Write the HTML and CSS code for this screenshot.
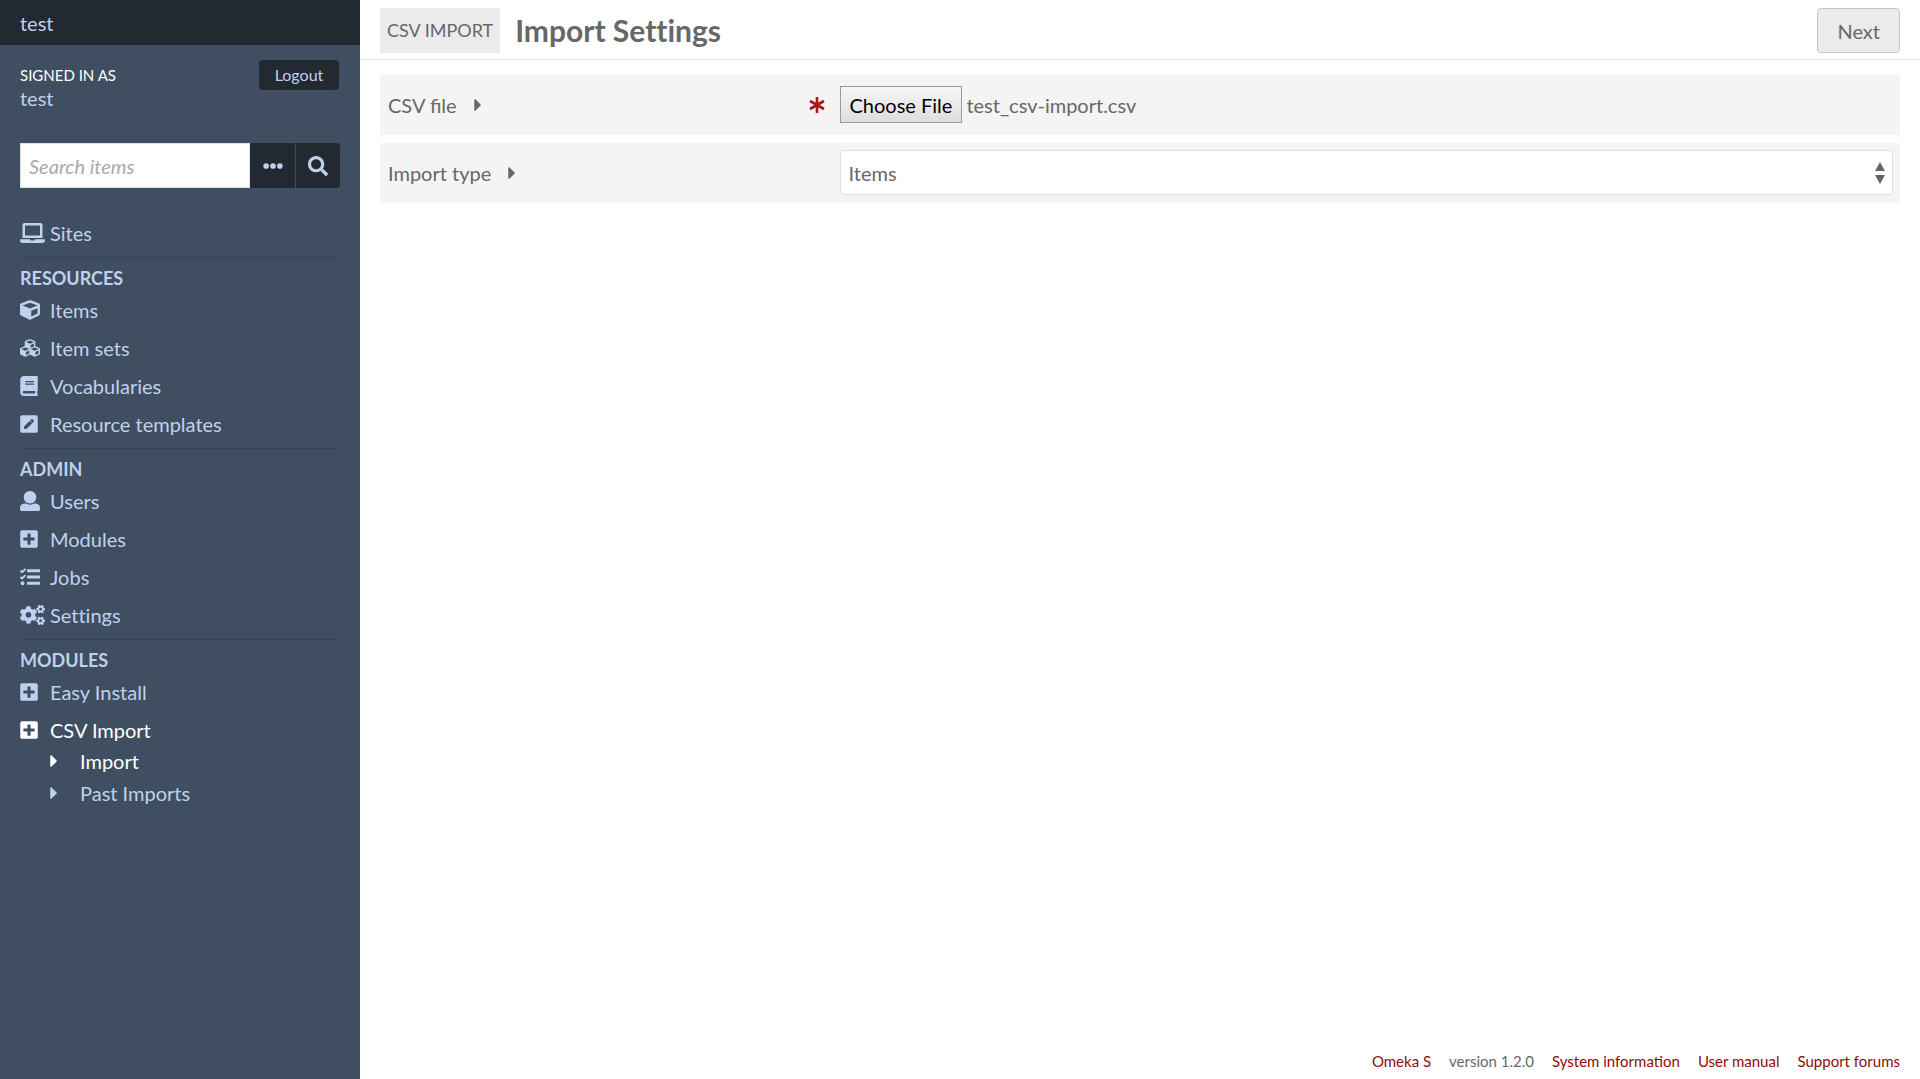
FILE: index.html
```html
<!DOCTYPE html>
<html lang="en">
<head>
<meta charset="utf-8">
<title>Import Settings</title>
<link rel="stylesheet" href="styles.css">
</head>
<body>
<svg class="sprite" aria-hidden="true">
  <symbol id="i-laptop" viewBox="0 0 640 512"><path d="M624 416H381.54c-.74 19.81-14.71 32-32.74 32H288c-18.69 0-33.02-17.47-32.77-32H16c-8.8 0-16 7.2-16 16v16c0 35.2 28.8 64 64 64h512c35.2 0 64-28.8 64-64v-16c0-8.8-7.2-16-16-16zM576 48c0-26.4-21.6-48-48-48H112C85.6 0 64 21.6 64 48v336h512V48zm-64 272H128V64h384v256z"/></symbol>
  <symbol id="i-cube" viewBox="0 0 512 512"><path d="M239.1 6.3l-208 78c-18.7 7-31.1 25-31.1 45v225.1c0 18.2 10.3 34.8 26.5 42.9l208 104c13.5 6.8 29.4 6.8 42.9 0l208-104c16.3-8.1 26.5-24.8 26.5-42.9V129.3c0-20-12.4-37.9-31.1-44.9l-208-78C262 2.2 250 2.2 239.1 6.3zM256 68.4l192 72v1.1l-192 78-192-78v-1.1l192-72zm32 356V275.5l160-65v133.9l-160 80z"/></symbol>
  <symbol id="i-cubes" viewBox="0 0 512 512"><path d="M488.6 250.2L392 214V105.5c0-15-9.3-28.4-23.4-33.7l-100-37.5c-8.1-3.1-17.1-3.1-25.3 0l-100 37.5c-14.1 5.3-23.4 18.7-23.4 33.7V214l-96.6 36.2C9.3 255.5 0 268.9 0 283.9V394c0 13.6 7.7 26.1 19.9 32.2l100 50c10.1 5.1 22.1 5.1 32.2 0l103.9-52 103.9 52c10.1 5.1 22.1 5.1 32.2 0l100-50c12.2-6.1 19.9-18.6 19.9-32.2V283.9c0-15-9.3-28.4-23.4-33.7zM358 214.8l-85 31.9v-68.2l85-37v73.3zM154 104.1l102-38.2 102 38.2v.6l-102 41.4-102-41.4v-.6zm84 291.1l-85 42.5v-79.1l85-38.8v75.4zm0-112l-102 41.4-102-41.4v-.6l102-38.2 102 38.2v.6zm240 112l-85 42.5v-79.1l85-38.8v75.4zm0-112l-102 41.4-102-41.4v-.6l102-38.2 102 38.2v.6z"/></symbol>
  <symbol id="i-book" viewBox="0 0 448 512"><path d="M448 360V24c0-13.3-10.7-24-24-24H96C43 0 0 43 0 96v320c0 53 43 96 96 96h328c13.3 0 24-10.7 24-24v-16c0-7.5-3.5-14.3-8.9-18.7-4.2-15.4-4.2-59.3 0-74.7 5.4-4.3 8.9-11.1 8.9-18.6zM128 134c0-3.3 2.7-6 6-6h212c3.3 0 6 2.7 6 6v20c0 3.3-2.7 6-6 6H134c-3.3 0-6-2.7-6-6v-20zm0 64c0-3.3 2.7-6 6-6h212c3.3 0 6 2.7 6 6v20c0 3.3-2.7 6-6 6H134c-3.3 0-6-2.7-6-6v-20zm253.4 250H96c-17.7 0-32-14.3-32-32 0-17.6 14.4-32 32-32h285.4c-1.9 17.1-1.9 46.9 0 64z"/></symbol>
  <symbol id="i-pen" viewBox="0 0 448 512"><path d="M400 480H48c-26.5 0-48-21.5-48-48V80c0-26.5 21.5-48 48-48h352c26.5 0 48 21.5 48 48v352c0 26.5-21.5 48-48 48zM238.1 177.9L102.4 313.6l-6.3 57.1c-.8 7.6 5.6 14.1 13.3 13.3l57.1-6.3L302.2 242c2.3-2.3 2.3-6.1 0-8.5L246.7 178c-2.5-2.4-6.3-2.4-8.6-.1zM345 165.1L314.9 135c-9.4-9.4-24.6-9.4-33.9 0l-23.1 23.1c-2.3 2.3-2.3 6.1 0 8.5l55.5 55.5c2.3 2.3 6.1 2.3 8.5 0L345 199c9.3-9.3 9.3-24.5 0-33.9z"/></symbol>
  <symbol id="i-user" viewBox="0 0 512 512"><path d="M256 0c88.366 0 160 71.634 160 160s-71.634 160-160 160S96 248.366 96 160 167.634 0 256 0zm183.283 333.821l-71.313-17.828c-74.923 53.89-165.738 41.864-223.94 0l-71.313 17.828C29.981 344.505 0 382.903 0 426.955V464c0 26.51 21.49 48 48 48h416c26.51 0 48-21.49 48-48v-37.045c0-44.052-29.981-82.45-72.717-93.134z"/></symbol>
  <symbol id="i-plus" viewBox="0 0 448 512"><path d="M400 32H48C21.5 32 0 53.5 0 80v352c0 26.5 21.5 48 48 48h352c26.5 0 48-21.5 48-48V80c0-26.5-21.5-48-48-48zm-32 252c0 6.6-5.4 12-12 12h-92v92c0 6.6-5.4 12-12 12h-56c-6.6 0-12-5.4-12-12v-92H92c-6.6 0-12-5.4-12-12v-56c0-6.6 5.4-12 12-12h92v-92c0-6.6 5.4-12 12-12h56c6.6 0 12 5.4 12 12v92h92c6.6 0 12 5.4 12 12v56z"/></symbol>
  <symbol id="i-tasks" viewBox="0 0 512 512"><rect x="180" y="60" width="332" height="76" rx="16"/><rect x="180" y="220" width="332" height="76" rx="16"/><rect x="180" y="380" width="332" height="76" rx="16"/><circle cx="64" cy="416" r="50"/><path fill="none" stroke="currentColor" stroke-width="46" d="M12 92l42 42 88-88M12 252l42 42 88-88"/></symbol>
  <symbol id="i-cogs" viewBox="0 0 640 512"><path d="M512.1 191l-8.2 14.3c-3 5.3-9.4 7.5-15.1 5.4-11.8-4.4-22.6-10.7-32.1-18.6-4.6-3.8-5.8-10.5-2.8-15.7l8.2-14.3c-6.9-8-12.3-17.3-15.9-27.4h-16.5c-6 0-11.2-4.3-12.2-10.3-2-12-2.1-24.6 0-37.1 1-6 6.2-10.4 12.2-10.4h16.5c3.6-10.1 9-19.4 15.9-27.4l-8.2-14.3c-3-5.2-1.9-11.9 2.8-15.7 9.5-7.9 20.4-14.2 32.1-18.6 5.7-2.1 12.1.1 15.1 5.4l8.2 14.3c10.5-1.9 21.2-1.9 31.7 0L552 6.3c3-5.3 9.4-7.5 15.1-5.4 11.8 4.4 22.6 10.7 32.1 18.6 4.6 3.8 5.8 10.5 2.8 15.7l-8.2 14.3c6.9 8 12.3 17.3 15.9 27.4h16.5c6 0 11.2 4.3 12.2 10.3 2 12 2.1 24.6 0 37.1-1 6-6.2 10.4-12.2 10.4h-16.5c-3.6 10.1-9 19.4-15.9 27.4l8.2 14.3c3 5.2 1.9 11.9-2.8 15.7-9.5 7.9-20.4 14.2-32.1 18.6-5.7 2.1-12.1-.1-15.1-5.4l-8.2-14.3c-10.4 1.9-21.2 1.9-31.7 0zm-10.5-58.8c38.5 29.6 82.4-14.3 52.8-52.8-38.5-29.7-82.4 14.3-52.8 52.8zM386.3 286.1l33.7 16.8c10.1 5.8 14.5 18.1 10.5 29.1-8.9 24.2-26.4 46.4-42.6 65.8-7.4 8.9-20.2 11.1-30.3 5.3l-29.1-16.8c-16 13.7-34.6 24.6-54.9 31.7v33.6c0 11.6-8.3 21.6-19.7 23.6-24.6 4.2-50.4 4.4-75.9 0-11.5-2-20-11.9-20-23.6V418c-20.3-7.2-38.9-18-54.9-31.7L74 403c-10 5.8-22.9 3.6-30.3-5.3-16.2-19.4-33.3-41.6-42.2-65.7-4-10.9.4-23.2 10.5-29.1l33.3-16.8c-3.9-20.9-3.9-42.4 0-63.4L12 205.8c-10.1-5.8-14.6-18.1-10.5-29 8.9-24.2 26-46.4 42.2-65.8 7.4-8.9 20.2-11.1 30.3-5.3l29.1 16.8c16-13.7 34.6-24.6 54.9-31.7V57.1c0-11.5 8.2-21.5 19.6-23.5 24.6-4.2 50.5-4.4 76-.1 11.5 2 20 11.9 20 23.6v33.6c20.3 7.2 38.9 18 54.9 31.7l29.1-16.8c10-5.8 22.9-3.6 30.3 5.3 16.2 19.4 33.2 41.6 42.1 65.8 4 10.9.1 23.2-10 29.1l-33.7 16.8c3.9 21 3.9 42.5 0 63.5zm-117.6 21.1c59.2-77-28.7-164.9-105.7-105.7-59.2 77 28.7 164.9 105.7 105.7zm243.4 182.7l-8.2 14.3c-3 5.3-9.4 7.5-15.1 5.4-11.8-4.4-22.6-10.7-32.1-18.6-4.6-3.8-5.8-10.5-2.8-15.7l8.2-14.3c-6.9-8-12.3-17.3-15.9-27.4h-16.5c-6 0-11.2-4.3-12.2-10.3-2-12-2.1-24.6 0-37.1 1-6 6.2-10.4 12.2-10.4h16.5c3.6-10.1 9-19.4 15.9-27.4l-8.2-14.3c-3-5.2-1.9-11.9 2.8-15.7 9.5-7.9 20.4-14.2 32.1-18.6 5.7-2.1 12.1.1 15.1 5.4l8.2 14.3c10.5-1.9 21.2-1.9 31.7 0l8.2-14.3c3-5.3 9.4-7.5 15.1-5.4 11.8 4.4 22.6 10.7 32.1 18.6 4.6 3.8 5.8 10.5 2.8 15.7l-8.2 14.3c6.9 8 12.3 17.3 15.9 27.4h16.5c6 0 11.2 4.3 12.2 10.3 2 12 2.1 24.6 0 37.1-1 6-6.2 10.4-12.2 10.4h-16.5c-3.6 10.1-9 19.4-15.9 27.4l8.2 14.3c3 5.2 1.9 11.9-2.8 15.7-9.5 7.9-20.4 14.2-32.1 18.6-5.7 2.1-12.1-.1-15.1-5.4l-8.2-14.3c-10.4 1.9-21.2 1.9-31.7 0zM501.6 431c38.5 29.6 82.4-14.3 52.8-52.8-38.5-29.6-82.4 14.3-52.8 52.8z"/></symbol>
  <symbol id="i-caret" viewBox="0 0 192 512"><path d="M0 384.662V127.338c0-17.818 21.543-26.741 34.142-14.142l128.658 128.658c7.81 7.81 7.81 20.474 0 28.284L34.142 398.804C21.543 411.404 0 402.48 0 384.662z"/></symbol>
  <symbol id="i-dots" viewBox="0 0 512 512"><circle cx="80" cy="256" r="72"/><circle cx="256" cy="256" r="72"/><circle cx="432" cy="256" r="72"/></symbol>
  <symbol id="i-search" viewBox="0 0 512 512"><path d="M505 442.7L405.3 343c-4.5-4.5-10.6-7-17-7H372c27.6-35.3 44-79.7 44-128C416 93.1 322.9 0 208 0S0 93.1 0 208s93.1 208 208 208c48.3 0 92.7-16.4 128-44v16.3c0 6.4 2.5 12.5 7 17l99.7 99.7c9.4 9.4 24.6 9.4 33.9 0l28.3-28.3c9.4-9.4 9.4-24.6.1-34zM208 336c-70.7 0-128-57.2-128-128 0-70.7 57.2-128 128-128 70.7 0 128 57.2 128 128 0 70.7-57.2 128-128 128z"/></symbol>
  <symbol id="i-required" viewBox="0 0 16 16"><path fill="none" stroke="currentColor" stroke-width="2.6" d="M8 0v16M1 4l14 8M15 4L1 12"/></symbol>
</svg>

<div class="layout">
  <header class="sidebar">
    <a class="site-title" href="#">test</a>
    <div class="user">
      <div>
        <p class="user-label">Signed in as</p>
        <a class="user-name" href="#">test</a>
      </div>
      <a class="logout" href="#">Logout</a>
    </div>
    <form class="search">
      <input class="search-input" type="text" placeholder="Search items" aria-label="Search items">
      <button class="search-button" type="button" aria-label="Advanced search"><svg class="icon"><use href="#i-dots"/></svg></button>
      <button class="search-button search-submit" type="button" aria-label="Search"><svg class="icon"><use href="#i-search"/></svg></button>
    </form>
    <nav>
      <section class="nav-section">
        <ul class="nav-list">
          <li><a class="nav-link" href="#"><svg class="icon icon-wide"><use href="#i-laptop"/></svg>Sites</a></li>
        </ul>
      </section>
      <section class="nav-section">
        <h4 class="nav-heading">Resources</h4>
        <ul class="nav-list">
          <li><a class="nav-link" href="#"><svg class="icon"><use href="#i-cube"/></svg>Items</a></li>
          <li><a class="nav-link" href="#"><svg class="icon"><use href="#i-cubes"/></svg>Item sets</a></li>
          <li><a class="nav-link" href="#"><svg class="icon icon-narrow"><use href="#i-book"/></svg>Vocabularies</a></li>
          <li><a class="nav-link" href="#"><svg class="icon icon-narrow"><use href="#i-pen"/></svg>Resource templates</a></li>
        </ul>
      </section>
      <section class="nav-section">
        <h4 class="nav-heading">Admin</h4>
        <ul class="nav-list">
          <li><a class="nav-link" href="#"><svg class="icon"><use href="#i-user"/></svg>Users</a></li>
          <li><a class="nav-link" href="#"><svg class="icon icon-narrow"><use href="#i-plus"/></svg>Modules</a></li>
          <li><a class="nav-link" href="#"><svg class="icon"><use href="#i-tasks"/></svg>Jobs</a></li>
          <li><a class="nav-link" href="#"><svg class="icon icon-wide"><use href="#i-cogs"/></svg>Settings</a></li>
        </ul>
      </section>
      <section class="nav-section">
        <h4 class="nav-heading">Modules</h4>
        <ul class="nav-list">
          <li><a class="nav-link" href="#"><svg class="icon icon-narrow"><use href="#i-plus"/></svg>Easy Install</a></li>
          <li>
            <a class="nav-link active" href="#"><svg class="icon icon-narrow"><use href="#i-plus"/></svg>CSV Import</a>
            <ul class="subnav">
              <li><a class="subnav-link active" href="#"><svg class="caret"><use href="#i-caret"/></svg>Import</a></li>
              <li><a class="subnav-link" href="#"><svg class="caret"><use href="#i-caret"/></svg>Past Imports</a></li>
            </ul>
          </li>
        </ul>
      </section>
    </nav>
  </header>

  <div class="content">
    <form class="import-form">
      <div class="page-head">
        <span class="section-tag">CSV Import</span>
        <h1 class="page-title">Import Settings</h1>
        <button class="next" type="button">Next</button>
      </div>
      <div class="fields">
        <div class="field">
          <div class="field-meta">
            <label for="source">CSV file</label>
            <a class="expand" href="#" aria-label="Expand"><svg class="caret"><use href="#i-caret"/></svg></a>
            <svg class="required"><use href="#i-required"/></svg>
          </div>
          <div class="inputs"><input class="file" type="file" id="source"></div>
        </div>
        <div class="field">
          <div class="field-meta">
            <label for="resource-type">Import type</label>
            <a class="expand" href="#" aria-label="Expand"><svg class="caret"><use href="#i-caret"/></svg></a>
          </div>
          <div class="inputs"><select class="select" id="resource-type"><option>Items</option></select></div>
        </div>
      </div>
    </form>
    <footer class="footer">
      <a href="#">Omeka S</a>
      <span>version 1.2.0</span>
      <a href="#">System information</a>
      <a href="#">User manual</a>
      <a href="#">Support forums</a>
    </footer>
  </div>
</div>
<script src="script.js"></script>
</body>
</html>
```
FILE: styles.css
```css
* {
  box-sizing: border-box;
}

body {
  margin: 0;
  background: #fff;
  color: #676767;
  font: 20px/30px Lato, sans-serif;
}

h1, h4, p, ul {
  margin: 0;
  padding: 0;
}

ul {
  list-style: none;
}

a {
  color: #920b0b;
  text-decoration: none;
}

input, select, button {
  font: inherit;
  color: inherit;
}

svg {
  fill: currentColor;
}

.sprite {
  display: none;
}

.layout {
  display: grid;
  grid-template-columns: 360px 1fr;
  min-height: 100vh;
}

/* Sidebar */
.sidebar {
  background: #404e61;
  color: #fff;
  font-variant-ligatures: none;
}

.sidebar a {
  color: #bfd1ee;
}

.sidebar .active {
  color: #fff;
}

.site-title {
  display: block;
  height: 45px;
  padding: 8px 20px;
  background: #222931;
}

.user {
  display: flex;
  justify-content: space-between;
  align-items: flex-start;
  padding: 15px 21px 0 20px;
}

.user-label {
  font-size: 15px;
  line-height: 24px;
  padding-top: 3px;
  text-transform: uppercase;
}

.user-name {
  display: block;
  line-height: 22px;
}

.logout {
  width: 80px;
  border-radius: 4px;
  background: #222931;
  font-size: 16px;
  text-align: center;
}

.search {
  display: flex;
  height: 45px;
  margin: 34px 20px 30px;
}

.search-input {
  flex: 1;
  min-width: 0;
  padding: 0 8px;
  border: 1px solid #dfdfdf;
  background: #fff;
  color: #676767;
}

.search-input::placeholder {
  color: #a9a9a9;
  font-style: italic;
}

.search-button {
  display: grid;
  place-items: center;
  width: 45px;
  padding: 0;
  border: 0;
  background: #222931;
  color: #bfd1ee;
}

.search-submit {
  border-left: 1px solid #404e61;
  border-radius: 0 4px 4px 0;
}

.icon {
  width: 20px;
  height: 20px;
  margin-right: 10px;
}

.icon-narrow {
  width: 18px;
  margin-right: 12px;
}

.icon-wide {
  width: 25px;
  margin-right: 5px;
}

.search-button .icon {
  margin: 0;
}

.nav-section {
  margin: 0 20px;
  padding-bottom: 9px;
  border-bottom: 1px solid #364252;
}

.nav-section:last-child {
  border-bottom: 0;
}

.nav-heading {
  padding: 8px 0 5px;
  font-size: 18px;
  line-height: 24px;
  color: #bfd1ee;
  text-transform: uppercase;
}

.nav-list {
  display: grid;
  gap: 8px;
}

.nav-link, .subnav-link {
  display: flex;
  align-items: center;
}

.subnav-link {
  padding-left: 30px;
  line-height: 32px;
}

.caret {
  width: 8px;
  height: 20px;
}

.subnav-link .caret {
  margin-right: 22px;
}

/* Main column */
.content {
  display: flex;
  flex-direction: column;
  justify-content: space-between;
}

.page-head {
  display: flex;
  align-items: center;
  padding: 8px 20px 6px;
  border-bottom: 1px solid #dfdfdf;
}

.section-tag {
  padding: 0 7px;
  background: #ebebeb;
  font-size: 18px;
  line-height: 45px;
  text-transform: uppercase;
}

.page-title {
  flex: 1;
  margin-left: 15px;
  font-size: 30px;
  font-variant-ligatures: none;
  line-height: 45px;
}

.next {
  height: 45px;
  padding: 0 19px;
  border: 1px solid #c6c6c6;
  border-radius: 4px;
  background: #ebebeb;
}

.fields {
  display: grid;
  gap: 8px;
  padding: 15px 20px;
}

.field {
  display: flex;
  align-items: center;
  height: 60px;
  padding: 0 7px 1px 8px;
  background: #f4f4f4;
}

.field-meta {
  display: flex;
  align-items: center;
  width: 30%;
}

.expand {
  display: flex;
  margin-left: 17px;
  color: #676767;
}

.required {
  width: 16px;
  height: 16px;
  margin: 0 15px 0 auto;
  color: #a91919;
}

.inputs {
  display: flex;
  width: 70%;
}

.file {
  width: 100%;
}

.file::file-selector-button {
  height: 37px;
  margin-right: 4px;
  padding: 0 9px;
  border: 1px solid #999;
  background: linear-gradient(#f6f6f6, #dedede);
  color: #000;
  font: inherit;
}

.select {
  appearance: none;
  width: 100%;
  height: 45px;
  padding: 0 8px;
  border: 1px solid #dfdfdf;
  border-radius: 4px;
  background: #fff url("data:image/svg+xml,%3Csvg xmlns='http://www.w3.org/2000/svg' width='10' height='22'%3E%3Cpath fill='%23676767' d='M5 0l5 9H0zM5 22l5-9H0z'/%3E%3C/svg%3E") no-repeat right 7px center;
}

.footer {
  display: flex;
  justify-content: flex-end;
  gap: 18px;
  padding: 0 20px 8px;
  font-size: 15px;
  line-height: 20px;
}
```
FILE: script.js
```js
const source = document.getElementById('source');
const transfer = new DataTransfer();
transfer.items.add(new File(['title\n'], 'test_csv-import.csv', { type: 'text/csv' }));
source.files = transfer.files;
```
